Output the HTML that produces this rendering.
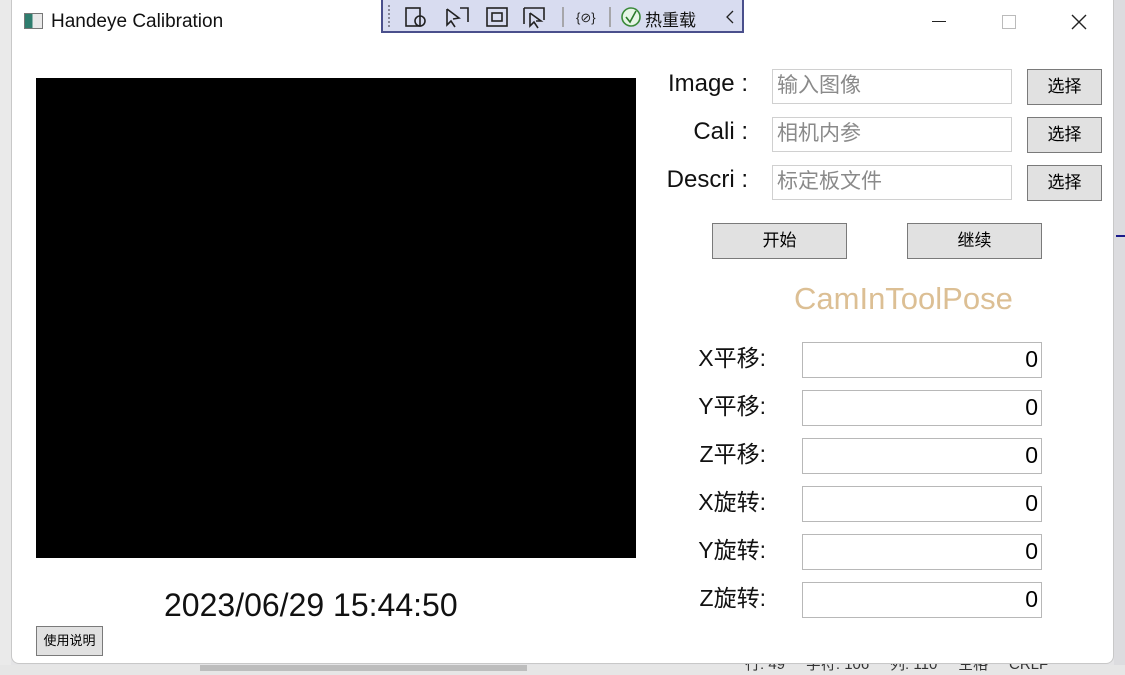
<!DOCTYPE html>
<html><head><meta charset="utf-8"><style>
*{margin:0;padding:0;box-sizing:border-box}
html,body{width:1125px;height:675px;overflow:hidden}
body{background:#e4e4e6;position:relative;font-family:"Liberation Sans","Noto Sans CJK SC",sans-serif}
.abs{position:absolute}
#win{left:11px;top:0;width:1103px;height:664px;background:#fff;border-radius:0 0 8px 8px;border:1px solid #c8c8c8;border-top:none}
.lbl{font-size:24px;color:#111;text-align:right;white-space:nowrap}
.lb2{font-size:23px;color:#111;text-align:right;white-space:nowrap;height:36px;line-height:36px}
.inp{border:1px solid #d0d0d0;background:#fff;color:#8a8a8a;font-size:21px;padding-left:4px;line-height:32px}
.btn{background:#e1e1e1;border:1px solid #7a7a7a;font-size:17px;text-align:center;color:#000}
.num{border:1px solid #b8b8b8;background:#fff;text-align:right;font-size:23px;padding-right:3px;line-height:32px}
</style></head><body>
<div class="abs" style="left:0;top:0;width:11px;height:675px;background:#eaeaea"></div>
<div class="abs" style="left:0;top:665px;width:1125px;height:10px;background:#e6e6e6"></div>
<div class="abs" style="left:200px;top:665px;width:327px;height:6px;background:#bdbdbd"></div>
<div class="abs" style="left:745px;top:655px;font-size:15px;line-height:20px;color:#333;white-space:nowrap">行: 49 &nbsp;&nbsp;&nbsp; 字符: 106 &nbsp;&nbsp;&nbsp; 列: 110 &nbsp;&nbsp;&nbsp; 空格 &nbsp;&nbsp;&nbsp; CRLF</div>
<div class="abs" style="left:1114px;top:0;width:11px;height:665px;background:#dcdcdf"></div>
<div class="abs" style="left:1116px;top:235px;width:9px;height:2px;background:#1a1a8a"></div>
<div id="win" class="abs"></div>
<div class="abs" style="left:24px;top:13px;width:19px;height:16px;border:1px solid #777;background:linear-gradient(90deg,#2f7d6e 45%,#e9e9e9 45%)"></div>
<div class="abs" style="left:51px;top:11px;font-size:19px;color:#111">Handeye Calibration</div>
<div class="abs" style="left:381px;top:0;width:363px;height:33px;background:#d8dcf0;border:2px solid #4a4f8c;border-top:none"></div>
<div class="abs" style="left:388px;top:5px;width:4px;height:22px;border-left:2px dotted #889"></div>
<svg class="abs" style="left:400px;top:4px" width="340" height="26" viewBox="0 0 340 26" fill="none" stroke="#222" stroke-width="1.6">
<rect x="6" y="4" width="14" height="18"/><circle cx="20" cy="17" r="5"/><path d="M47 5 L47 21 L51 17 L55 23 M47 5 L59 14 L53 15 M60 4 H68 V18"/>
<rect x="87" y="4" width="20" height="18"/><rect x="92" y="9" width="10" height="8"/>
<path d="M124 4 H144 V16 M124 4 V20 M130 9 L130 22 L134 18 L138 24 M130 9 L141 17 L136 17"/>
<path d="M163 3 V23" stroke="#999"/><text x="176" y="18" font-size="13" fill="#222" stroke="none" font-family="Liberation Sans">{⊘}</text>
<path d="M210 3 V23" stroke="#999"/><circle cx="231" cy="13" r="9" stroke="#3a8a3a" fill="#e6f5e6"/><path d="M226 13 L230 18 L236 7" stroke="#2a7a2a"/>
<path d="M333 7 L327 13 L333 19" stroke-width="1.3"/></svg>
<div class="abs" style="left:645px;top:6px;font-size:17px;color:#111">热重载</div>
<div class="abs" style="left:932px;top:21px;width:14px;height:1px;background:#222"></div>
<div class="abs" style="left:1002px;top:15px;width:14px;height:14px;border:1px solid #bbb"></div>
<svg class="abs" style="left:1071px;top:14px" width="16" height="16"><path d="M1 1 L15 15 M15 1 L1 15" stroke="#222" stroke-width="1.4"/></svg>
<div class="abs" style="left:36px;top:78px;width:600px;height:480px;background:#000"></div>
<div class="abs" style="left:164px;top:587px;font-size:32px;color:#111;white-space:nowrap">2023/06/29 15:44:50</div>
<div class="abs btn" style="left:36px;top:626px;width:67px;height:30px;font-size:13px;line-height:28px">使用说明</div>
<div class="abs lbl" style="left:630px;top:70px;width:118px">Image :</div>
<div class="abs lbl" style="left:630px;top:118px;width:118px">Cali :</div>
<div class="abs lbl" style="left:630px;top:166px;width:118px">Descri :</div>
<div class="abs inp" style="left:772px;top:69px;width:240px;height:35px">输入图像</div>
<div class="abs inp" style="left:772px;top:117px;width:240px;height:35px">相机内参</div>
<div class="abs inp" style="left:772px;top:165px;width:240px;height:35px">标定板文件</div>
<div class="abs btn" style="left:1027px;top:69px;width:75px;height:36px;line-height:34px">选择</div>
<div class="abs btn" style="left:1027px;top:117px;width:75px;height:36px;line-height:34px">选择</div>
<div class="abs btn" style="left:1027px;top:165px;width:75px;height:36px;line-height:34px">选择</div>
<div class="abs btn" style="left:712px;top:223px;width:135px;height:36px;line-height:34px">开始</div>
<div class="abs btn" style="left:907px;top:223px;width:135px;height:36px;line-height:34px">继续</div>
<div class="abs" style="left:794px;top:281px;font-size:31px;color:#dcbf94;white-space:nowrap">CamInToolPose</div>
<div class="abs lb2" style="left:660px;top:340px;width:106px">X平移:</div>
<div class="abs lb2" style="left:660px;top:388px;width:106px">Y平移:</div>
<div class="abs lb2" style="left:660px;top:436px;width:106px">Z平移:</div>
<div class="abs lb2" style="left:660px;top:484px;width:106px">X旋转:</div>
<div class="abs lb2" style="left:660px;top:532px;width:106px">Y旋转:</div>
<div class="abs lb2" style="left:660px;top:580px;width:106px">Z旋转:</div>
<div class="abs num" style="left:802px;top:342px;width:240px;height:36px">0</div>
<div class="abs num" style="left:802px;top:390px;width:240px;height:36px">0</div>
<div class="abs num" style="left:802px;top:438px;width:240px;height:36px">0</div>
<div class="abs num" style="left:802px;top:486px;width:240px;height:36px">0</div>
<div class="abs num" style="left:802px;top:534px;width:240px;height:36px">0</div>
<div class="abs num" style="left:802px;top:582px;width:240px;height:36px">0</div>
</body></html>
